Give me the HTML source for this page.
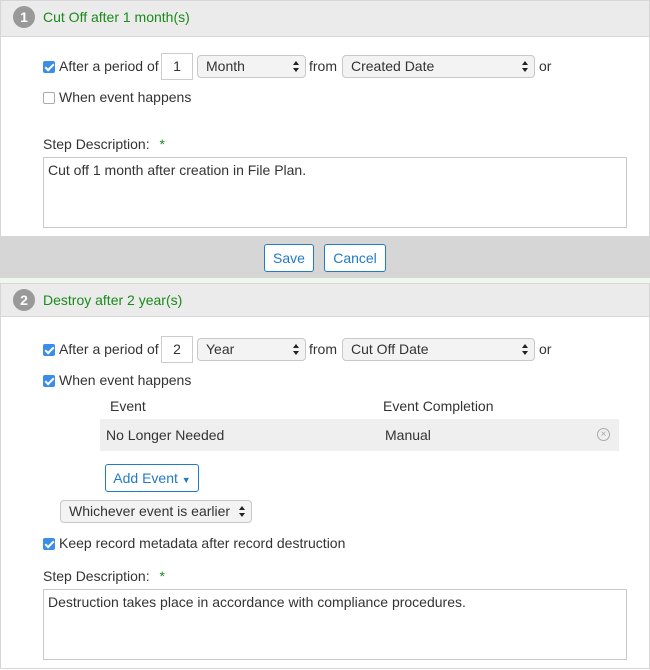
<!DOCTYPE html>
<html><head><style>
*{box-sizing:border-box}
body{margin:0;width:650px;height:670px;background:#fff;font-family:"Liberation Sans",sans-serif;font-size:14px;color:#333;position:relative;overflow:hidden}
.a{position:absolute;white-space:nowrap}
.hdr{position:absolute;left:0;width:650px;background:#ebebeb;border:1px solid #d6d6d6}
.num{position:absolute;width:22px;height:22px;border-radius:50%;background:#999;color:#fff;font-weight:bold;text-align:center;line-height:22px;font-size:14px}
.ttl{color:#1a8a1a;font-size:14px}
.cb{position:absolute;width:12px;height:12px;border-radius:2px}
.cb.on{background:#3b8ee8}
.cb.on:after{content:"";position:absolute;left:4px;top:1px;width:3px;height:7px;border:solid #fff;border-width:0 2px 2px 0;transform:rotate(45deg)}
.cb.off{border:1px solid #aaa;background:#fff}
.inp{position:absolute;border:1px solid #ccc;background:#fff;text-align:center;line-height:24px}
.sel{position:absolute;border:1px solid #c8c8c8;border-radius:4px;background:#f3f3f3;padding-left:8px;line-height:20px}
.sel:after{content:"";position:absolute;right:6px;top:50%;margin-top:-6px;border:3.5px solid transparent;border-bottom:4px solid #222;border-top:none;}
.sel:before{content:"";position:absolute;right:6px;top:50%;margin-top:1px;border:3.5px solid transparent;border-top:4px solid #222;border-bottom:none;}
.ta{position:absolute;border:1px solid #c8c8c8;padding:4px 4px;background:#fff}
.btn{position:absolute;border:1px solid #1f7ac8;border-radius:3px;background:#fff;color:#1f7ac8;text-align:center}
</style></head><body>
<div style="position:absolute;left:0;top:0;width:650px;height:237px;border:1px solid #d6d6d6"></div>
<div class="hdr" style="top:0;height:37px"></div>
<div class="num" style="left:13px;top:6px">1</div>
<div class="a ttl" style="left:43px;top:9px">Cut Off after 1 month(s)</div>

<div class="cb on" style="left:43px;top:61px"></div>
<div class="a" style="left:59px;top:58px">After a period of</div>
<div class="inp" style="left:161px;top:53px;width:32px;height:27px">1</div>
<div class="sel" style="left:197px;top:55px;width:109px;height:23px">Month</div>
<div class="a" style="left:309px;top:58px">from</div>
<div class="sel" style="left:342px;top:55px;width:193px;height:23px">Created Date</div>
<div class="a" style="left:539px;top:58px">or</div>
<div class="cb off" style="left:43px;top:92px"></div>
<div class="a" style="left:59px;top:89px">When event happens</div>
<div class="a" style="left:43px;top:136px">Step Description: <span style="color:#1a8a1a;margin-left:6px">*</span></div>
<div class="ta" style="left:43px;top:157px;width:584px;height:71px">Cut off 1 month after creation in File Plan.</div>

<div style="position:absolute;left:0;top:237px;width:650px;height:41px;background:#d6d6d6"></div>
<div class="btn" style="left:264px;top:244px;width:50px;height:28px;line-height:26px">Save</div>
<div class="btn" style="left:324px;top:244px;width:62px;height:28px;line-height:26px">Cancel</div>
<div style="position:absolute;left:0;top:278px;width:650px;height:5px;background:#eef7ee"></div>

<div style="position:absolute;left:0;top:283px;width:650px;height:386px;border:1px solid #d6d6d6"></div>
<div class="hdr" style="top:283px;height:34px"></div>
<div class="num" style="left:13px;top:289px">2</div>
<div class="a ttl" style="left:43px;top:292px">Destroy after 2 year(s)</div>

<div class="cb on" style="left:43px;top:344px"></div>
<div class="a" style="left:59px;top:341px">After a period of</div>
<div class="inp" style="left:161px;top:336px;width:32px;height:27px">2</div>
<div class="sel" style="left:197px;top:338px;width:109px;height:23px">Year</div>
<div class="a" style="left:309px;top:341px">from</div>
<div class="sel" style="left:342px;top:338px;width:193px;height:23px">Cut Off Date</div>
<div class="a" style="left:539px;top:341px">or</div>
<div class="cb on" style="left:43px;top:375px"></div>
<div class="a" style="left:59px;top:372px">When event happens</div>
<div class="a" style="left:110px;top:398px">Event</div>
<div class="a" style="left:383px;top:398px">Event Completion</div>
<div style="position:absolute;left:100px;top:419px;width:519px;height:32px;background:#efefef"></div>
<div class="a" style="left:106px;top:427px">No Longer Needed</div>
<div class="a" style="left:385px;top:427px">Manual</div>
<div style="position:absolute;left:597px;top:428px;width:13px;height:13px;border:1px solid #aaa;border-radius:50%;color:#aaa;font-size:10px;line-height:11px;text-align:center">×</div>
<div class="btn" style="left:105px;top:464px;width:94px;height:28px;line-height:26px">Add Event <span style="font-size:9px">▼</span></div>
<div class="sel" style="left:60px;top:500px;width:192px;height:23px">Whichever event is earlier</div>
<div class="cb on" style="left:43px;top:538px"></div>
<div class="a" style="left:59px;top:535px">Keep record metadata after record destruction</div>
<div class="a" style="left:43px;top:568px">Step Description: <span style="color:#1a8a1a;margin-left:6px">*</span></div>
<div class="ta" style="left:43px;top:589px;width:584px;height:71px">Destruction takes place in accordance with compliance procedures.</div>
</body></html>
